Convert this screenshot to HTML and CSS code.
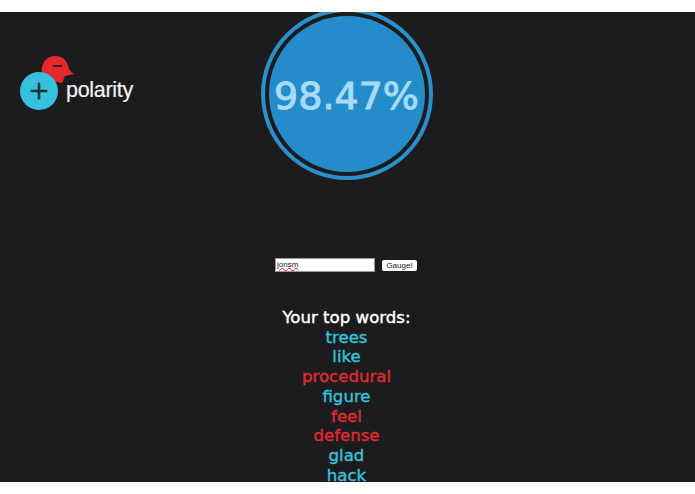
FILE: index.html
```html
<!DOCTYPE html>
<html lang="en">
<head>
    <meta charset="UTF-8">
    <title>Polarity</title>
    <link rel="stylesheet" href="styles.css">
</head>
<body>
    <div class="page">
        <div class="header">
            <div class="logo">
                <svg class="logo-icon" viewBox="0 0 56 56" width="56" height="56">
                    <path d="M21.7 15C21.7 7 28 1 35 1c7 0 12 4 13 10 1 4 3 6 6 8l-9 2-3 7-12-2-9-11z" fill="#e5282b"/>
                    <rect x="32.5" y="10" width="10" height="2" rx="1" fill="#4a1516"/>
                    <circle cx="19" cy="36" r="19" fill="#36c1dc"/>
                    <rect x="10.5" y="34.7" width="17" height="2.6" rx="1.3" fill="#123038"/>
                    <rect x="17.7" y="27.5" width="2.6" height="17" rx="1.3" fill="#123038"/>
                </svg>
                <span class="logo-text">polarity</span>
            </div>
            <div class="gauge">
                <div class="gauge-inner">98.47%</div>
            </div>
        </div>
        <form class="search">
            <div class="search-input"><span class="misspelled">jonsm</span></div>
            <button class="search-btn" type="button">Gauge!</button>
        </form>
        <div class="words">
            <h2>Your top words:</h2>
            <p class="pos">trees</p>
            <p class="pos">like</p>
            <p class="neg">procedural</p>
            <p class="pos">figure</p>
            <p class="neg">feel</p>
            <p class="neg">defense</p>
            <p class="pos">glad</p>
            <p class="pos">hack</p>
        </div>
    </div>
</body>
</html>
```

FILE: styles.css
```css
html, body {
    margin: 0;
    background-color: #fff;
}

.page {
    margin-top: 12px;
    padding-right: 2px;
    height: 470px;
    overflow: hidden;
    background-color: #1c1c1e;
    font-family: "DejaVu Sans", Inter, sans-serif;
}

.header {
    display: grid;
    grid-template-columns: 1fr 172px 1fr;
    height: 168px;
}

.logo {
    display: flex;
    align-items: flex-end;
    padding: 43px 0 0 20px;
    height: 56px;
}

.logo-icon {
    flex: none;
}

.logo-text {
    margin: 0 0 8px -10px;
    color: #f2f2f2;
    font-family: "Liberation Sans", Arial, sans-serif;
    font-size: 21.5px;
    letter-spacing: -0.3px;
    line-height: 26px;
    -webkit-text-stroke: 0.2px #f2f2f2;
}

.gauge {
    box-sizing: border-box;
    width: 172px;
    height: 172px;
    margin-top: -4px;
    padding: 4px;
    border: 4px solid #2a8fcb;
    border-radius: 50%;
    background-color: #1c1c1e;
}

.gauge-inner {
    box-sizing: border-box;
    display: flex;
    align-items: center;
    justify-content: center;
    height: 100%;
    padding-top: 3px;
    border-radius: 50%;
    background-color: #248ccb;
    color: #a6dcfa;
    font-size: 38px;
    white-space: nowrap;
    -webkit-text-stroke: 1px #a6dcfa;
}

.search {
    display: flex;
    align-items: center;
    justify-content: center;
    gap: 7px;
    margin: 78px 0 0;
    padding-right: 1px;
    height: 14px;
}

.search-input {
    box-sizing: border-box;
    width: 100px;
    height: 14px;
    padding: 0 1px;
    border: 1px solid #999;
    background-color: #fff;
    color: #222;
    font-family: "Liberation Sans", Arial, sans-serif;
    font-size: 8px;
    line-height: 12px;
}

.misspelled {
    text-decoration: underline wavy #d02020 1px;
    text-underline-offset: 0;
}

.search-btn {
    box-sizing: border-box;
    width: 35px;
    height: 11px;
    padding: 0;
    border: none;
    border-radius: 2px;
    background-color: #fff;
    color: #222;
    font-family: "Liberation Sans", Arial, sans-serif;
    font-size: 8px;
    line-height: 11px;
}

.words {
    margin-top: 36px;
    text-align: center;
    font-size: 16.6px;
    line-height: 19.7px;
    -webkit-text-stroke: 0.4px;
}

.words h2 {
    margin: 0;
    color: #fff;
    font-size: 16.6px;
    font-weight: 400;
    line-height: 19.7px;
}

.words p {
    margin: 0;
}

.pos {
    color: #36c1dc;
}

.neg {
    color: #e02b2b;
}
```
